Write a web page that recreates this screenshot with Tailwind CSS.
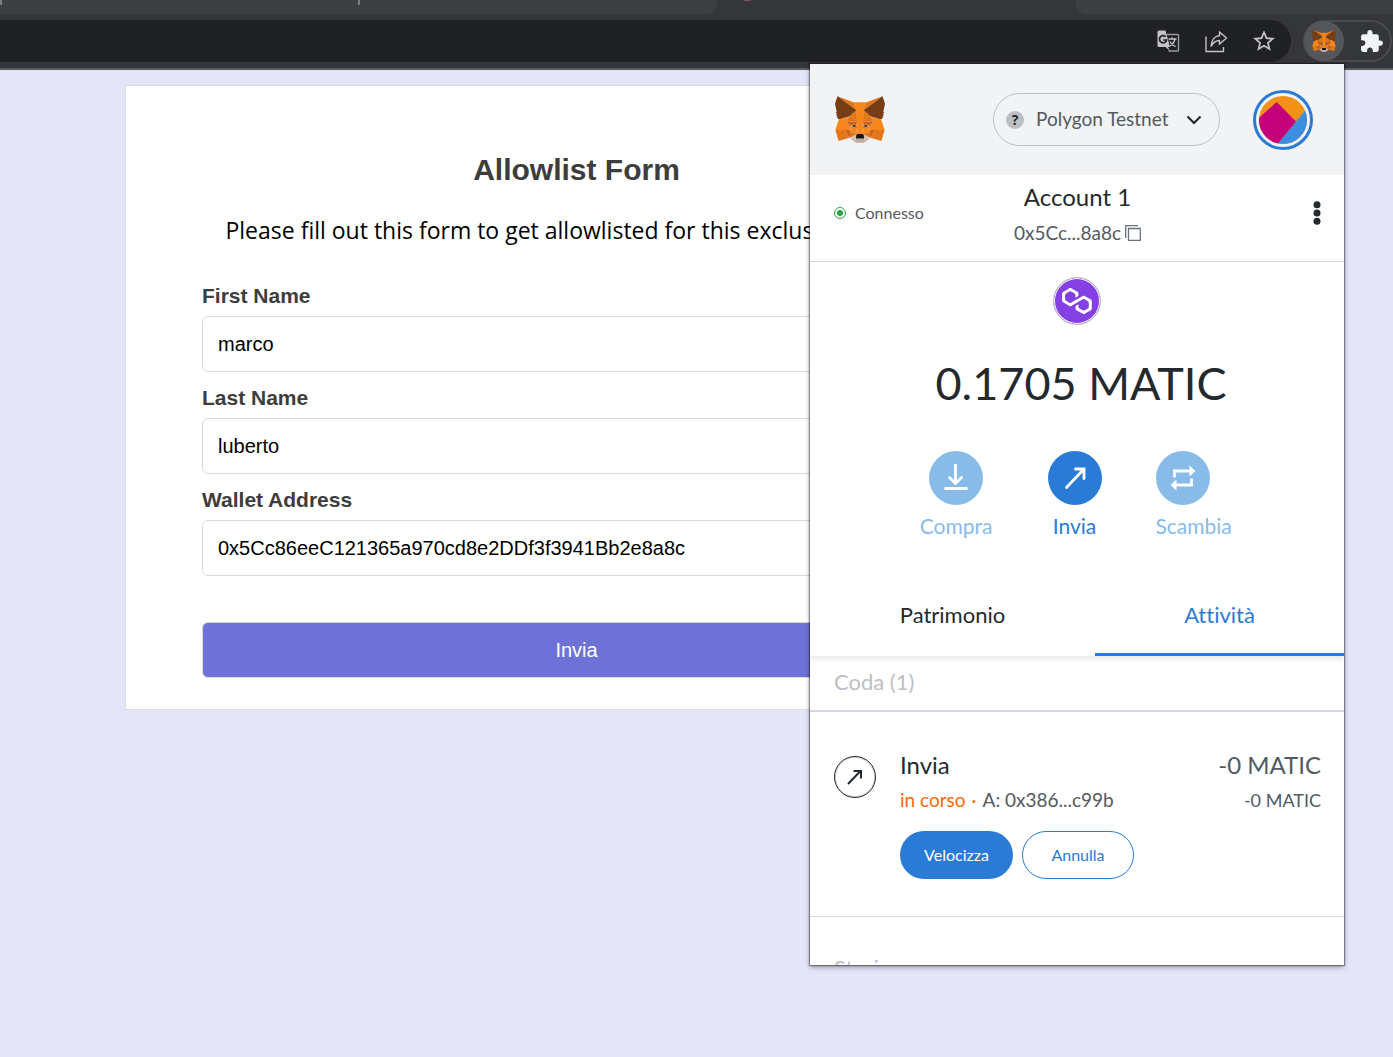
<!DOCTYPE html>
<html lang="it">
<head>
<meta charset="utf-8">
<meta name="viewport" content="width=device-width, initial-scale=1">
<title>Allowlist Form</title>
<script src="https://cdn.jsdelivr.net/npm/@tailwindcss/browser@4"></script>
</head>
<body class="relative min-h-screen overflow-x-hidden bg-[#e5e5fa] font-['Liberation_Sans',Arial,sans-serif] text-black">

<svg class="hidden" aria-hidden="true">
  <symbol id="fox" viewBox="31.8 35.5 255 236.4">
    <g fill="#e2761b"><path d="M274.1 35.5 174.6 109.4 193 65.8zM44.4 35.5l98.7 74.6-17.5-44.3z"/><path d="M238.3 206.8 211.8 247.4 268.5 263 284.8 207.7zM33.9 207.7 50.1 263 106.8 247.4 80.3 206.8zM103.6 138.2 87.8 162.1 144.1 164.6 142.1 104.1zM214.9 138.2 175.9 103.4 174.6 164.6 230.8 162.1zM106.8 247.4 140.6 230.9 111.4 208.1zM177.9 230.9 211.8 247.4 207.1 208.1z"/></g>
    <path fill="#d7c1b3" d="M211.8 247.4 177.9 230.9 180.6 253 180.3 262.3zM106.8 247.4 138.3 262.3 138.1 253 140.6 230.9z"/>
    <path fill="#cd6116" d="M106.8 247.4 111.6 206.8 80.3 207.7zM207 206.8 211.8 247.4 238.3 207.7zM230.8 162.1 174.6 164.6 179.8 193.5 188.1 176.1 208.1 185.2zM110.6 185.2 130.6 176.1 138.8 193.5 144.1 164.6 87.8 162.1z"/>
    <path fill="#e4751f" d="M87.8 162.1 111.4 208.1 110.6 185.2zM208.1 185.2 207.1 208.1 230.8 162.1zM144.1 164.6 138.8 193.5 145.4 227.6 146.9 182.7zM174.6 164.6 171.9 182.6 173.1 227.6 179.8 193.5z"/>
    <path fill="#f6851b" d="M179.8 193.5 173.1 227.6 177.9 230.9 207.1 208.1 208.1 185.2zM110.6 185.2 111.4 208.1 140.6 230.9 145.4 227.6 138.8 193.5z"/>
    <path fill="#e4751f" d="M110.6 185.2 130.6 176.1 138.8 193.5zM208.1 185.2 188.1 176.1 179.8 193.5z"/>
    <path fill="#233447" d="M138.8 193.5 120 188 131.500 179zM179.8 193.5 187.200 179 198.600 188z"/>
    <path fill="#c0ad9e" d="M180.3 262.3 180.6 253 178.1 250.8 140.4 250.8 138.1 253 138.3 262.3 106.8 247.4 117.8 256.4 140.1 271.9 178.4 271.9 200.8 256.4 211.8 247.4z"/>
    <path fill="#161616" d="M177.9 230.9 173.1 227.6 145.4 227.6 140.6 230.9 138.1 253 140.4 250.8 178.1 250.8 180.6 253z"/>
    <path fill="#763d16" d="M278.3 114.2 286.8 73.4 274.1 35.5 177.9 106.9 214.9 138.2 267.2 153.5 278.8 140 273.8 136.4 281.8 129.1 275.6 124.3 283.6 118.2zM31.8 73.4 40.3 114.2 34.9 118.2 42.9 124.3 36.8 129.1 44.8 136.4 39.8 140 51.3 153.5 103.6 138.2 140.6 106.9 44.4 35.5z"/>
    <path fill="#f6851b" d="M267.2 153.5 214.9 138.2 230.8 162.1 207.1 208.1 238.3 207.7 284.8 207.7zM103.6 138.2 51.3 153.5 33.9 207.7 80.3 207.7 111.4 208.1 87.8 162.1zM174.6 164.6 177.9 106.9 193.1 65.8 125.6 65.8 140.6 106.9 144.1 164.6 145.3 182.8 145.4 227.6 173.1 227.6 173.3 182.8z"/>
  </symbol>
</svg>

<!-- Browser toolbar -->
<div class="border-b-2 border-[#5c5d61] bg-[#35363a] pb-[6px]">
  <div class="flex h-5 items-start">
    <div class="flex h-[14px] w-[717px] rounded-br-[10px] bg-[#3c4043]">
      <span class="h-[5px] w-[358px] border-l-2 border-[#7c8083]"></span>
      <span class="h-[5px] border-l-2 border-[#7c8083]"></span>
    </div>
    <span class="ml-[27px] h-px w-[7px] bg-[#7b5359]"></span>
    <div class="ml-auto h-[14px] w-[317px] rounded-bl-[10px] bg-[#3c4043]"></div>
  </div>
  <div class="flex h-[42px] items-center gap-3 pr-[1px]">
    <div class="flex h-full flex-1 items-center justify-end gap-[22px] rounded-r-full bg-[#202124] pr-[14px] text-[#c3c4c6]">
      <button type="button" aria-label="Translate" class="size-[26px]">
        <svg viewBox="0 0 26 26" class="size-full" fill="none">
          <path d="M12 6.500h10.500a1 1 0 0 1 1 1V22a1 1 0 0 1-1 1H13.500" stroke="#9b9c9f" stroke-width="1.400"/>
          <path fill="currentColor" d="M4 2.500h6.500l4.500 16.500h-2l2 4-4.500-4H4A1.500 1.500 0 0 1 2.500 17.500V4A1.500 1.500 0 0 1 4 2.500z"/>
          <path d="M10.800 8.800A3.600 3.600 0 1 0 11.600 12H8.200" stroke="#202124" stroke-width="1.700"/>
          <path d="M13.500 11h8M17 9.300V11M20 11c-.7 3.200-2.700 5.600-5 7M15 13.500c1 2 3.500 4.200 5.500 5.200" stroke="currentColor" stroke-width="1.300"/>
        </svg>
      </button>
      <button type="button" aria-label="Share" class="size-[26px]">
        <svg viewBox="0 0 26 26" class="size-full" fill="none" stroke="currentColor" stroke-width="1.400">
          <path d="M3 8.500v15h17.500v-4.500"/>
          <path d="M16.500 4 23.500 10l-7 6v-3.500c-4 0-6.500 2-8.500 6 .3-6 3.500-10.500 8.500-11z" stroke-linejoin="miter"/>
        </svg>
      </button>
      <button type="button" aria-label="Bookmark" class="size-[26px]">
        <svg viewBox="0 0 24 24" class="size-full" fill="currentColor"><path d="M22 9.240l-7.190-.620L12 2 9.190 8.630 2 9.240l5.460 4.730L5.820 21 12 17.270 18.180 21l-1.630-7.030L22 9.240zM12 15.400l-3.760 2.270 1-4.280-3.320-2.880 4.380-.380L12 6.100l1.710 4.040 4.380.380-3.320 2.880 1 4.280L12 15.400z"/></svg>
      </button>
    </div>
    <div class="flex h-[42px] w-[89px] items-center rounded-full border-2 border-[#4a4b50]">
      <button type="button" aria-label="MetaMask" class="-ml-px flex size-10 items-center justify-center rounded-full bg-[#54565a]">
        <svg class="h-[22px] w-6"><use href="#fox"/></svg>
      </button>
      <button type="button" aria-label="Extensions" class="ml-[15px]">
        <svg viewBox="0 0 24 24" class="size-[25px]" fill="#f1f3f4"><path d="M20.500 11H19V7c0-1.100-.9-2-2-2h-4V3.500C13 2.120 11.880 1 10.500 1S8 2.120 8 3.500V5H4c-1.100 0-1.990.9-1.990 2v3.800H3.500c1.490 0 2.700 1.210 2.700 2.700s-1.210 2.700-2.700 2.700H2V20c0 1.100.9 2 2 2h3.800v-1.500c0-1.490 1.210-2.700 2.700-2.700 1.490 0 2.700 1.210 2.700 2.700V22H17c1.100 0 2-.9 2-2v-4h1.500c1.380 0 2.500-1.120 2.500-2.500S21.880 11 20.500 11z"/></svg>
      </button>
    </div>
  </div>
</div>

<!-- Form page -->
<main class="pt-[15px] pl-[125px]">
  <form class="max-w-[903px] border border-[#dcdce0] bg-white px-[76px] pt-16 pb-[31px]">
    <h1 class="text-center text-[30px] leading-10 font-bold text-[#3d3d3d]">Allowlist Form</h1>
    <p class="mt-6 text-center font-['Open_Sans',sans-serif] text-[23px] leading-8 whitespace-nowrap">Please fill out this form to get allowlisted for this exclusive launch.</p>
    <div class="mt-[38px] flex flex-col gap-[14px]">
      <div>
        <label for="first" class="mb-2 block text-[21px] leading-6 font-bold text-[#3d3d3d]">First Name</label>
        <input id="first" type="text" value="marco" class="block h-14 w-full rounded-md border border-[#d9d9d9] bg-white px-[15px] text-xl">
      </div>
      <div>
        <label for="last" class="mb-2 block text-[21px] leading-6 font-bold text-[#3d3d3d]">Last Name</label>
        <input id="last" type="text" value="luberto" class="block h-14 w-full rounded-md border border-[#d9d9d9] bg-white px-[15px] text-xl">
      </div>
      <div>
        <label for="wallet" class="mb-2 block text-[21px] leading-6 font-bold text-[#3d3d3d]">Wallet Address</label>
        <input id="wallet" type="text" value="0x5Cc86eeC121365a970cd8e2DDf3f3941Bb2e8a8c" class="block h-14 w-full rounded-md border border-[#d9d9d9] bg-white px-[15px] text-xl">
      </div>
    </div>
    <button type="submit" class="mt-[46px] block h-14 w-full rounded-md border border-[#d9d9d9] bg-[#6e72d6] text-xl text-white">Invia</button>
  </form>
</main>

<!-- Wallet popup -->
<section aria-label="MetaMask" class="absolute top-16 right-[49px] h-[901px] w-[534px] overflow-hidden bg-white font-['Lato',sans-serif] text-[#24292e] shadow-[0_0_1px_1px_rgba(0,0,0,0.35),0_2px_5px_rgba(0,0,0,0.4)] [font-variant-ligatures:none]">
  <header class="flex h-[111px] items-center bg-[#f2f3f5] pr-[31px] pl-[25px]">
    <svg class="h-[47px] w-[50px]"><use href="#fox"/></svg>
    <button type="button" class="ml-auto flex h-[53px] w-[227px] items-center rounded-full border border-[#bbc0c5] pr-[17px] pl-3 text-[19px] text-[#535a61]">
      <span class="flex size-[18px] items-center justify-center rounded-full bg-[#bbc0c5] font-['Open_Sans',sans-serif] text-sm font-bold text-[#24292e]">?</span>
      <span class="ml-3">Polygon Testnet</span>
      <svg viewBox="0 0 16 16" class="ml-auto size-4" fill="none" stroke="#24292e" stroke-width="2.200"><path d="M1.500 4.500 8 11l6.500-6.500"/></svg>
    </button>
    <button type="button" aria-label="Account" class="ml-[33px] flex size-[60px] items-center justify-center rounded-full border-[3px] border-[#2a7bd6]">
      <svg viewBox="0 0 48 48" class="size-12 rounded-full">
        <rect width="48" height="48" fill="#f29018"/>
        <path fill="#3c8fe0" d="M48 12.500 18.500 48H48z"/>
        <path fill="#c5007b" d="M17.700 6 37 25.500 18.500 48H-8V29z"/>
      </svg>
    </button>
  </header>

  <div class="grid h-[87px] grid-cols-[1fr_auto_1fr] items-center border-b border-[#d6d9dc] pr-[23px] pl-6">
    <div class="-mt-[10px] flex items-center gap-[9px] text-base text-[#535a61]">
      <span class="flex size-3 items-center justify-center rounded-full border border-[#28a745]"><span class="size-[6px] rounded-full bg-[#28a745]"></span></span>
      Connesso
    </div>
    <div class="flex h-full flex-col items-center pt-[6px]">
      <h2 class="text-2xl leading-8">Account 1</h2>
      <button type="button" class="mt-2 flex items-center gap-1 text-[19px] leading-6 text-[#535a61]">
        0x5Cc...8a8c
        <svg viewBox="0 0 16 16" class="size-4" fill="none" stroke="#6a737d" stroke-width="1.300"><path d="M.700 13V.700H13"/><path d="M3.500 3.500h11.800v11.800H3.500z"/></svg>
      </button>
    </div>
    <button type="button" aria-label="Options" class="-mt-[10px] justify-self-end">
      <svg viewBox="0 0 8 24" class="h-6 w-2" fill="#24292e"><circle cx="4" cy="3.800" r="3.500"/><circle cx="4" cy="12" r="3.500"/><circle cx="4" cy="20.200" r="3.500"/></svg>
    </button>
  </div>

  <div class="flex flex-col items-center pt-[15px]">
    <span class="flex size-12 items-center justify-center rounded-full border border-[#bbc0c5] bg-[#8440e4] shadow-[inset_0_0_0_1px_#fff]">
      <svg viewBox="0 0 38.400 33.500" class="h-[26px] w-[30px]" fill="#fff"><path d="M29,10.2c-0.7-0.4-1.6-0.4-2.4,0L21,13.5l-3.8,2.1l-5.5,3.3c-0.7,0.4-1.6,0.4-2.4,0L5,16.3c-0.7-0.4-1.2-1.2-1.2-2.1v-5c0-0.8,0.4-1.6,1.2-2.1l4.300-2.500c0.7-0.4,1.6-0.4,2.4,0L16,7.2c0.7,0.4,1.2,1.2,1.2,2.1v3.3l3.8-2.2V7c0-0.8-0.4-1.6-1.2-2.1l-8-4.7c-0.7-0.4-1.6-0.4-2.4,0L1.2,5C0.4,5.4,0,6.2,0,7v9.4c0,0.8,0.4,1.6,1.2,2.1l8.1,4.7c0.7,0.4,1.6,0.4,2.4,0l5.5-3.2l3.8-2.2l5.5-3.2c0.7-0.4,1.6-0.4,2.4,0l4.3,2.5c0.7,0.4,1.2,1.2,1.2,2.1v5c0,0.8-0.4,1.6-1.2,2.1L29,28.8c-0.7,0.4-1.6,0.4-2.4,0l-4.3-2.5c-0.7-0.4-1.2-1.2-1.2-2.1V21l-3.8,2.2v3.3c0,0.8,0.4,1.6,1.2,2.1l8.1,4.7c0.7,0.4,1.6,0.4,2.4,0l8.1-4.7c0.7-0.4,1.2-1.2,1.2-2.1V17c0-0.8-0.4-1.6-1.2-2.1L29,10.2z"/></svg>
    </span>
    <p class="mt-7 pl-2 text-[45px] leading-[60px]">0.1705 MATIC</p>
    <div class="mt-[38px] flex gap-[54px] text-[21px] leading-6 text-[#88bbe8]">
      <button type="button" class="flex w-[75px] flex-col items-center gap-[9px]">
        <span class="flex size-[54px] items-center justify-center rounded-full bg-[#88bbe8]">
          <svg viewBox="0 0 26 28" class="h-7 w-[26px]" fill="none" stroke="#fff" stroke-width="2.800" stroke-linecap="round" stroke-linejoin="round"><path d="M12.500 1v18M6.500 13.500l6 6 6-6M2.500 24.500h21"/></svg>
        </span>
        Compra
      </button>
      <button type="button" class="flex w-[54px] flex-col items-center gap-[9px] text-[#2a7bd6]">
        <span class="flex size-[54px] items-center justify-center rounded-full bg-[#2a7bd6]">
          <svg viewBox="0 0 24 24" class="size-6" fill="none" stroke="#fff" stroke-width="2.800" stroke-linecap="round" stroke-linejoin="miter"><path d="M3.500 21.500 20.500 3.500M12.500 3H21v9.500"/></svg>
        </span>
        Invia
      </button>
      <button type="button" class="flex w-[80px] flex-col items-start gap-[9px]">
        <span class="flex size-[54px] items-center justify-center rounded-full bg-[#88bbe8]">
          <svg viewBox="0 0 26 26" class="size-[26px]" fill="none" stroke="#fff" stroke-width="2.800"><path d="M4.500 12.500V6H20M21.500 13.500v6.500H6"/><path d="M19.500.500v11l6-5.500zM6.500 14.500v11L.500 20z" fill="#fff" stroke="none"/></svg>
        </span>
        Scambia
      </button>
    </div>
  </div>

  <div class="mt-[37px] flex h-[81px] text-[22px] shadow-[0_4px_4px_rgba(0,0,0,0.08)]">
    <button type="button" class="w-[285px] border-b-[3px] border-transparent">Patrimonio</button>
    <button type="button" class="flex-1 border-b-[3px] border-[#2a7bd6] text-[#2a7bd6]">Attività</button>
  </div>

  <h3 class="h-14 border-b-2 border-[#d2d8dd] px-6 text-[22px] leading-[52px] text-[#bbc0c5]">Coda (1)</h3>
  <article class="flex border-b border-[#d2d8dd] pt-[37px] pr-[23px] pb-[37px] pl-6">
    <span class="mt-[7px] flex size-[42px] items-center justify-center rounded-full border border-[#24292e] ring-1 ring-[#24292e]/20 ring-inset">
      <svg viewBox="0 0 16 16" class="size-4" fill="none" stroke="#24292e" stroke-width="2"><path d="M1 15 13.500 2M6.500 2H14v7.500"/></svg>
    </span>
    <div class="ml-6">
      <h4 class="text-2xl leading-8">Invia</h4>
      <p class="mt-[7px] flex gap-[6px] text-[19px] leading-6 text-[#535a61]"><span class="text-[#f66a0a]">in corso</span><span class="text-[#f66a0a]">·</span><span>A: 0x386...c99b</span></p>
      <div class="mt-[19px] flex gap-[9px] text-base">
        <button type="button" class="h-12 w-[113px] rounded-full bg-[#2a7bd6] text-white">Velocizza</button>
        <button type="button" class="h-12 w-28 rounded-full border border-[#2a7bd6] text-[#2a7bd6]">Annulla</button>
      </div>
    </div>
    <div class="ml-auto text-right text-[#535a61]">
      <p class="text-2xl leading-8">-0 MATIC</p>
      <p class="mt-[7px] text-[18px] leading-6">-0 MATIC</p>
    </div>
  </article>
  <h3 class="px-6 pt-6 text-[22px] leading-[54px] text-[#bbc0c5]">Storico</h3>
</section>
</body>
</html>
